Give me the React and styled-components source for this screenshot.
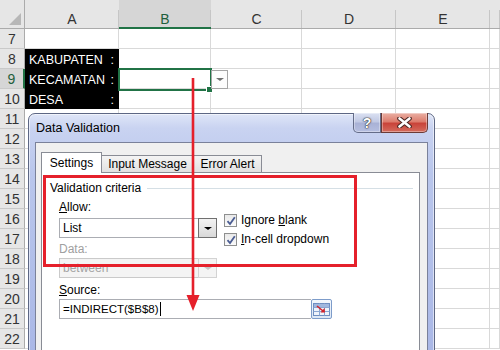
import styled, { createGlobalStyle } from "styled-components";

const GlobalStyle = createGlobalStyle`
  html, body { margin: 0; padding: 0; background: #fff; }
  body { font-family: "Liberation Sans", Arial, sans-serif; overflow: hidden; }
  * { box-sizing: border-box; }
`;

const COLS = [
  { name: "A", width: 94 },
  { name: "B", width: 92 },
  { name: "C", width: 91 },
  { name: "D", width: 94 },
  { name: "E", width: 94 },
  { name: "", width: 10 },
];
const ROWS = Array.from({ length: 16 }, (_, i) => i + 7);
const LABELS = { 8: "KABUPATEN", 9: "KECAMATAN", 10: "DESA" };
const RED = "#e5202b";
const GREEN = "#217346";

const Sheet = styled.div`
  position: relative;
  width: 500px;
  height: 350px;
  overflow: hidden;
`;

const Grid = styled.div`
  display: grid;
  grid-template-columns: 25px ${COLS.map((c) => `${c.width}px`).join(" ")};
  grid-template-rows: 29px repeat(${ROWS.length}, 20px);
`;

const Corner = styled.div`
  display: flex;
  align-items: flex-end;
  justify-content: flex-end;
  padding: 0 3px 3px 0;
  background: #e6e6e6;
  border-right: 1px solid #ababab;
  border-bottom: 1px solid #ababab;
`;

const CornerMark = styled.span`
  width: 0;
  height: 0;
  border-left: 12px solid transparent;
  border-bottom: 12px solid #b7b7b7;
`;

const ColHead = styled.div`
  display: flex;
  align-items: center;
  justify-content: center;
  padding-top: 10px;
  font-size: 14px;
  color: ${(p) => (p.$sel ? "#1f5f3c" : "#333")};
  background: linear-gradient(#c6c6c6, #c6c6c6) right 10px / 1px 19px no-repeat,
    ${(p) => (p.$sel ? "#d6d6d6" : "#e6e6e6")};
  border-bottom: ${(p) => (p.$sel ? `2px solid ${GREEN}` : "1px solid #ababab")};
`;

const RowHead = styled.div`
  display: flex;
  align-items: center;
  justify-content: center;
  font-size: 14px;
  color: ${(p) => (p.$sel ? "#1f5f3c" : "#333")};
  background: ${(p) => (p.$sel ? "#d6d6d6" : "#e6e6e6")};
  border-bottom: 1px solid #c9c9c9;
  border-right: ${(p) => (p.$sel ? `2px solid ${GREEN}` : "1px solid #ababab")};
`;

const Cell = styled.div`
  display: flex;
  align-items: flex-end;
  justify-content: space-between;
  padding: 0 4px 1px 4px;
  font-size: 12.5px;
  color: #fff;
  background: ${(p) => (p.$dark ? "#000" : "#fff")};
  border-right: 1px solid ${(p) => (p.$dark ? "#000" : "#d9d9d9")};
  border-bottom: 1px solid ${(p) => (p.$dark ? "#000" : "#d9d9d9")};
`;

const Selection = styled.div`
  position: absolute;
  left: 118px;
  top: 68px;
  width: 94px;
  height: 23px;
  border: 2px solid ${GREEN};
`;

const FillHandle = styled.div`
  position: absolute;
  left: 206px;
  top: 86px;
  width: 7px;
  height: 7px;
  background: ${GREEN};
  border: 1px solid #fff;
`;

const CellDrop = styled.div`
  position: absolute;
  left: 211px;
  top: 70px;
  width: 17px;
  height: 19px;
  display: flex;
  align-items: center;
  justify-content: center;
  background: #fdfdfd;
  border: 1px solid #a6a6a6;
`;

const Arrow = styled.span`
  width: 0;
  height: 0;
  border-left: ${(p) => p.$w || 4}px solid transparent;
  border-right: ${(p) => p.$w || 4}px solid transparent;
  border-top: ${(p) => (p.$w || 4) - 1}px solid ${(p) => p.$color || "#000"};
`;

/* dialog */
const Dialog = styled.div`
  position: absolute;
  left: 28px;
  top: 113px;
  width: 407px;
  height: 262px;
  z-index: 2;
  display: flex;
  flex-direction: column;
  padding: 0 6px 6px 6px;
  border: 1px solid #5d6784;
  border-radius: 7px 7px 0 0;
  background: linear-gradient(180deg, #dfe6f8 0px, #c9d3f1 14px, #b9c6ec 60px, #a8b6e6 100%);
  box-shadow: inset 0 0 0 1px rgba(255, 255, 255, 0.55);
`;

const TitleBar = styled.div`
  height: 28px;
  display: flex;
  align-items: flex-start;
  justify-content: space-between;
`;

const Title = styled.span`
  padding: 7px 0 0 1px;
  font-size: 12.5px;
  line-height: 14px;
  color: #000;
`;

const Caption = styled.div`
  display: flex;
  margin-top: -1px;
`;

const CapButton = styled.div`
  width: ${(p) => p.$w}px;
  height: 20px;
  display: flex;
  align-items: center;
  justify-content: center;
  border: 1px solid ${(p) => (p.$close ? "#6b3b37" : "#646c88")};
  border-top: none;
  border-radius: ${(p) => (p.$close ? "0 0 5px 0" : "0 0 0 5px")};
  background: ${(p) =>
    p.$close
      ? "linear-gradient(180deg, #eab0a4 0%, #dd7d6e 45%, #c9443a 55%, #d46b5d 100%)"
      : "linear-gradient(180deg, #dbe1f2 0%, #c1c9e4 45%, #a9b2d6 55%, #b6bfe0 100%)"};
  box-shadow: inset 0 0 0 1px rgba(255, 255, 255, 0.35);
  color: #fff;
  font-weight: bold;
  font-size: 14px;
  text-shadow: 0 0 1px #333, 0 0 1px #333, 0 0 2px #444;
`;

const Body = styled.div`
  flex: 1;
  display: flex;
  flex-direction: column;
  padding: 9px 7px 0 5px;
  background: #f0f0f0;
  border: 1px solid #7a819a;
`;

const Tabs = styled.div`
  display: flex;
  align-items: flex-end;
  height: 21px;
  margin-bottom: -1px;
  position: relative;
  z-index: 1;
`;

const Tab = styled.div`
  width: ${(p) => p.$w}px;
  height: ${(p) => (p.$active ? 21 : 18)}px;
  margin-left: ${(p) => (p.$first ? 0 : -1)}px;
  display: flex;
  align-items: center;
  justify-content: center;
  font-size: 12px;
  color: #000;
  background: ${(p) => (p.$active ? "#fff" : "linear-gradient(180deg, #f4f4f4, #e1e1e1)")};
  border: 1px solid #898c95;
  border-bottom: ${(p) => (p.$active ? "none" : "1px solid #898c95")};
`;

const Panel = styled.div`
  flex: 1;
  padding: 8px 0 0 8px;
  background: #fff;
  border: 1px solid #898c95;
`;

const GroupHead = styled.div`
  display: flex;
  align-items: center;
  gap: 6px;
  margin-right: 6px;
  font-size: 12px;
  line-height: 14px;
  color: #000;
`;

const Rule = styled.span`
  flex: 1;
  height: 1px;
  background: #d5dfe5;
`;

const Form = styled.div`
  display: grid;
  grid-template-columns: 158px 1fr;
  column-gap: 7px;
  margin-left: 9px;
  align-items: start;
`;

const Label = styled.div`
  grid-column: 1;
  margin-top: ${(p) => p.$mt}px;
  font-size: 12px;
  line-height: 14px;
  color: ${(p) => (p.$disabled ? "#a0a0a0" : "#000")};
`;

const Combo = styled.div`
  grid-column: 1;
  margin-top: ${(p) => p.$mt}px;
  height: 20px;
  display: flex;
  background: ${(p) => (p.$disabled ? "#f4f4f4" : "#fff")};
  border: 1px solid ${(p) => (p.$disabled ? "#cacaca" : "#abadb3")};
`;

const ComboText = styled.span`
  flex: 1;
  padding-left: 3px;
  font-size: 12px;
  line-height: 18px;
  color: ${(p) => (p.$disabled ? "#a3a3a3" : "#000")};
`;

const ComboButton = styled.span`
  width: 19px;
  margin: -1px -1px -1px 0;
  display: flex;
  align-items: center;
  justify-content: center;
  background: ${(p) =>
    p.$disabled ? "#f4f4f4" : "linear-gradient(180deg, #f3f3f3 0%, #e6e6e6 50%, #d8d8d8 100%)"};
  border: 1px solid ${(p) => (p.$disabled ? "#d3d3d3" : "#707070")};
`;

const Checks = styled.div`
  grid-column: 2;
  grid-row: 2 / span 3;
  display: flex;
  flex-direction: column;
  gap: 6px;
`;

const CheckRow = styled.label`
  display: flex;
  align-items: center;
  gap: 4px;
  font-size: 12px;
  line-height: 13px;
  color: #000;
`;

const Box = styled.span`
  width: 13px;
  height: 13px;
  display: flex;
  align-items: center;
  justify-content: center;
  border: 1px solid #8e8f8f;
  background: linear-gradient(180deg, #e9e9e9, #fbfbfb);
`;

const SourceRow = styled.div`
  grid-column: 1 / -1;
  margin-top: 2px;
  width: 273px;
  display: flex;
`;

const SourceInput = styled.div`
  flex: 1;
  height: 20px;
  display: flex;
  align-items: center;
  padding-left: 3px;
  font-size: 11.5px;
  color: #000;
  border: 1px solid #abadb3;
  border-right: none;
`;

const Caret = styled.span`
  width: 1px;
  height: 14px;
  margin-left: 1px;
  background: #000;
`;

const RefButton = styled.div`
  width: 21px;
  height: 20px;
  display: flex;
  align-items: center;
  justify-content: center;
  border: 1px solid #7d9cca;
  border-radius: 2px;
  background: linear-gradient(180deg, #f4f8fd, #dce7f5);
`;

const Highlight = styled.div`
  position: absolute;
  left: 43px;
  top: 175px;
  width: 314px;
  height: 92px;
  border: 3px solid ${RED};
  z-index: 3;
`;

const Overlay = styled.svg`
  position: absolute;
  left: 0;
  top: 0;
  z-index: 4;
`;

const U = styled.span`
  text-decoration: underline;
`;

const Check = () => (
  <svg width="10" height="10" viewBox="0 0 10 10">
    <path d="M1.5 5.2 L4 8 L8.8 1.2" fill="none" stroke="#4b5d93" strokeWidth="1.8" />
  </svg>
);

const CloseGlyph = () => (
  <svg width="15" height="11" viewBox="0 0 15 11">
    <path d="M2.5 1.5 L12.5 9.5 M12.5 1.5 L2.5 9.5" stroke="#4a2622" strokeWidth="4.6" strokeLinecap="round" />
    <path d="M2.5 1.5 L12.5 9.5 M12.5 1.5 L2.5 9.5" stroke="#fff" strokeWidth="2.6" strokeLinecap="round" />
  </svg>
);

const RefIcon = () => (
  <svg width="17" height="13" viewBox="0 0 17 13">
    <rect x="0.5" y="0.5" width="16" height="12" fill="#eef3fb" stroke="#6f8fc2" />
    <path d="M0.5 4.5 H16.5 M0.5 8.5 H16.5 M6.5 0.5 V12.5 M11.5 0.5 V12.5" stroke="#8aa6d2" />
    <rect x="1" y="1" width="15" height="3" fill="#9fb7de" />
    <path d="M4 3 L10 8" stroke="#d3232b" strokeWidth="1.6" />
    <path d="M7.5 9.5 L12 9.5 L11.5 5 Z" fill="#d3232b" />
  </svg>
);

export default function App() {
  return (
    <>
      <GlobalStyle />
      <Sheet>
        <Grid>
          <Corner>
            <CornerMark />
          </Corner>
          {COLS.map((c) => (
            <ColHead key={c.name || "f"} $sel={c.name === "B"}>
              {c.name}
            </ColHead>
          ))}
          {ROWS.map((r) => [
            <RowHead key={`h${r}`} $sel={r === 9}>
              {r}
            </RowHead>,
            ...COLS.map((c, i) => {
              const dark = i === 0 && LABELS[r];
              return (
                <Cell key={`${r}${c.name || "f"}`} $dark={!!dark}>
                  {dark && (
                    <>
                      <span>{LABELS[r]}</span>
                      <span>:</span>
                    </>
                  )}
                </Cell>
              );
            }),
          ])}
        </Grid>

        <Selection />
        <FillHandle />
        <CellDrop>
          <Arrow $w={4} $color="#707070" />
        </CellDrop>

        <Dialog>
          <TitleBar>
            <Title>Data Validation</Title>
            <Caption>
              <CapButton $w={28}>?</CapButton>
              <CapButton $w={47} $close>
                <CloseGlyph />
              </CapButton>
            </Caption>
          </TitleBar>
          <Body>
            <Tabs>
              <Tab $w={61} $active $first>
                Settings
              </Tab>
              <Tab $w={93}>Input Message</Tab>
              <Tab $w={69}>Error Alert</Tab>
            </Tabs>
            <Panel>
              <GroupHead>
                Validation criteria
                <Rule />
              </GroupHead>
              <Form>
                <Label $mt={5}>
                  <U>A</U>llow:
                </Label>
                <Combo $mt={4}>
                  <ComboText>List</ComboText>
                  <ComboButton>
                    <Arrow $w={4} />
                  </ComboButton>
                </Combo>
                <Checks>
                  <CheckRow>
                    <Box>
                      <Check />
                    </Box>
                    <span>
                      Ignore <U>b</U>lank
                    </span>
                  </CheckRow>
                  <CheckRow>
                    <Box>
                      <Check />
                    </Box>
                    <span>
                      <U>I</U>n-cell dropdown
                    </span>
                  </CheckRow>
                </Checks>
                <Label $mt={4} $disabled>
                  Data:
                </Label>
                <Combo $mt={2} $disabled>
                  <ComboText $disabled>between</ComboText>
                  <ComboButton $disabled>
                    <Arrow $w={4} $color="#c4c4c4" />
                  </ComboButton>
                </Combo>
                <Label $mt={5}>
                  <U>S</U>ource:
                </Label>
                <SourceRow>
                  <SourceInput>
                    =INDIRECT($B$8)
                    <Caret />
                  </SourceInput>
                  <RefButton>
                    <RefIcon />
                  </RefButton>
                </SourceRow>
              </Form>
            </Panel>
          </Body>
        </Dialog>

        <Highlight />
        <Overlay width="500" height="350" viewBox="0 0 500 350">
          <line x1="193" y1="78" x2="193" y2="298" stroke={RED} strokeWidth="2.6" />
          <polygon points="186.5,295 199.5,295 193,311" fill={RED} />
        </Overlay>
      </Sheet>
    </>
  );
}
